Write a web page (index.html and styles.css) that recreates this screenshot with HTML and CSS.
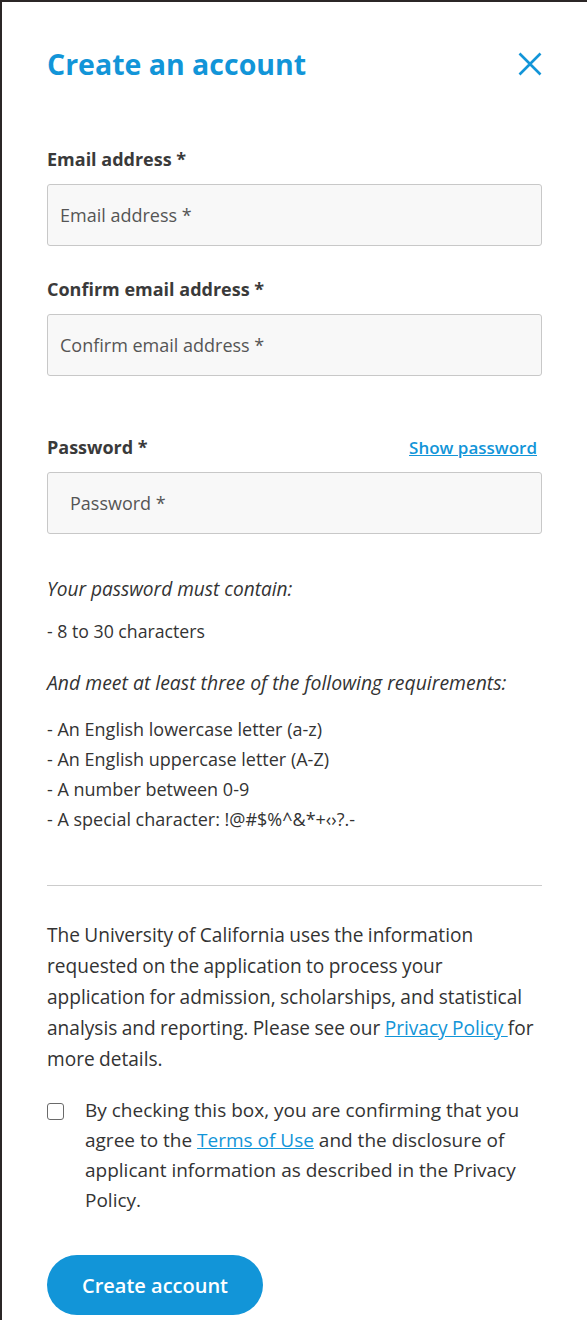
FILE: index.html
```html
<!DOCTYPE html>
<html lang="en">
<head>
<meta charset="utf-8">
<title>Create an account</title>
<link rel="stylesheet" href="styles.css">
</head>
<body>
<div class="panel">
  <div class="header">
    <h1 class="title">Create an account</h1>
    <button class="close" aria-label="Close">
      <svg width="24" height="24" viewBox="0 0 24 24"><path d="M1.5 1.5 L22.5 22.5 M22.5 1.5 L1.5 22.5" stroke="#1295d8" stroke-width="2.6" fill="none"/></svg>
    </button>
  </div>

  <div class="field field-first">
    <label class="label">Email address *</label>
    <div class="input">Email address *</div>
  </div>

  <div class="field">
    <label class="label">Confirm email address *</label>
    <div class="input">Confirm email address *</div>
  </div>

  <div class="field field-pw">
    <div class="label-row">
      <label class="label">Password *</label>
      <a class="link show" href="#">Show password</a>
    </div>
    <div class="input input-pw">Password *</div>
  </div>

  <p class="req-title">Your password must contain:</p>
  <p class="req-item">- 8 to 30 characters</p>
  <p class="req-title req-title2">And meet at least three of the following requirements:</p>
  <ul class="req-list">
    <li>- An English lowercase letter (a-z)</li>
    <li>- An English uppercase letter (A-Z)</li>
    <li>- A number between 0-9</li>
    <li>- A special character: !@#$%^&amp;*+&lsaquo;&rsaquo;?.-</li>
  </ul>

  <hr class="divider">

  <p class="info">The University of California uses the information requested on the application to process your application for admission, scholarships, and statistical analysis and reporting. Please see our <a class="link" href="#">Privacy Policy </a>for more details.</p>

  <div class="agree">
    <span class="checkbox"></span>
    <p class="agree-text">By checking this box, you are confirming that you agree to the <a class="link" href="#">Terms of Use</a> and the disclosure of applicant information as described in the Privacy Policy.</p>
  </div>

  <button class="submit">Create account</button>
</div>
</body>
</html>
```

FILE: styles.css
```css
html, body {
  margin: 0;
  padding: 0;
}
body {
  background: #2b2626;
  padding: 2px 0 0 2px;
  font-family: "Open Sans", "Noto Sans", sans-serif;
  color: #333333;
}
.panel {
  background: #ffffff;
  min-height: 1318px;
  padding: 44px 45px 0 45px;
  box-sizing: border-box;
}
.header {
  display: flex;
  justify-content: space-between;
  align-items: center;
  height: 36px;
}
.title {
  margin: 0;
  font-size: 28.5px;
  font-weight: 700;
  color: #1295d8;
  line-height: 36px;
}
.close {
  border: 0;
  background: none;
  padding: 0;
  width: 24px;
  height: 24px;
  display: flex;
}
.field {
  margin-top: 32px;
}
.field-first {
  margin-top: 66px;
}
.field-pw {
  margin-top: 60px;
}
.label {
  display: block;
  font-size: 18px;
  font-weight: 700;
  line-height: 22px;
  color: #3a3a3a;
}
.label-row {
  display: flex;
  justify-content: space-between;
  align-items: baseline;
  height: 22px;
  padding-right: 5px;
}
.link {
  color: #1295d8;
  text-decoration: underline;
}
.show {
  font-size: 17px;
  font-weight: 600;
  line-height: 22px;
}
.input {
  margin-top: 14px;
  height: 62px;
  box-sizing: border-box;
  border: 1px solid #c8c8c8;
  border-radius: 3px;
  background: #f8f8f8;
  display: flex;
  align-items: center;
  padding-left: 12px;
  font-size: 18px;
  color: #555555;
}
.input-pw {
  padding-left: 22px;
}
.req-title {
  margin: 43px 0 0;
  font-size: 19.1px;
  font-style: italic;
  line-height: 24px;
}
.req-title2 {
  margin-top: 28px;
  font-size: 19.4px;
}
.req-item {
  margin: 18px 0 0;
  font-size: 17.7px;
  line-height: 24px;
}
.req-list {
  list-style: none;
  margin: 19px 0 0;
  padding: 0;
  font-size: 18px;
  line-height: 30px;
}
.divider {
  border: 0;
  border-top: 1px solid #cccccc;
  margin: 51px 0 0;
}
.info {
  margin: 34px 0 0;
  font-size: 19.1px;
  word-spacing: -0.6px;
  line-height: 31px;
}
.agree {
  display: flex;
  align-items: flex-start;
  margin-top: 20px;
  gap: 21px;
}
.checkbox {
  flex: none;
  width: 15px;
  height: 15px;
  border: 1.5px solid #6a6a6a;
  border-radius: 3px;
  margin-top: 8px;
}
.agree-text {
  margin: 0;
  font-size: 19px;
  line-height: 30px;
}
.submit {
  margin-top: 40px;
  width: 216px;
  height: 60px;
  border: 0;
  border-radius: 30px;
  background: #1295d8;
  color: #ffffff;
  font-family: inherit;
  font-size: 20px;
  font-weight: 600;
}
```
